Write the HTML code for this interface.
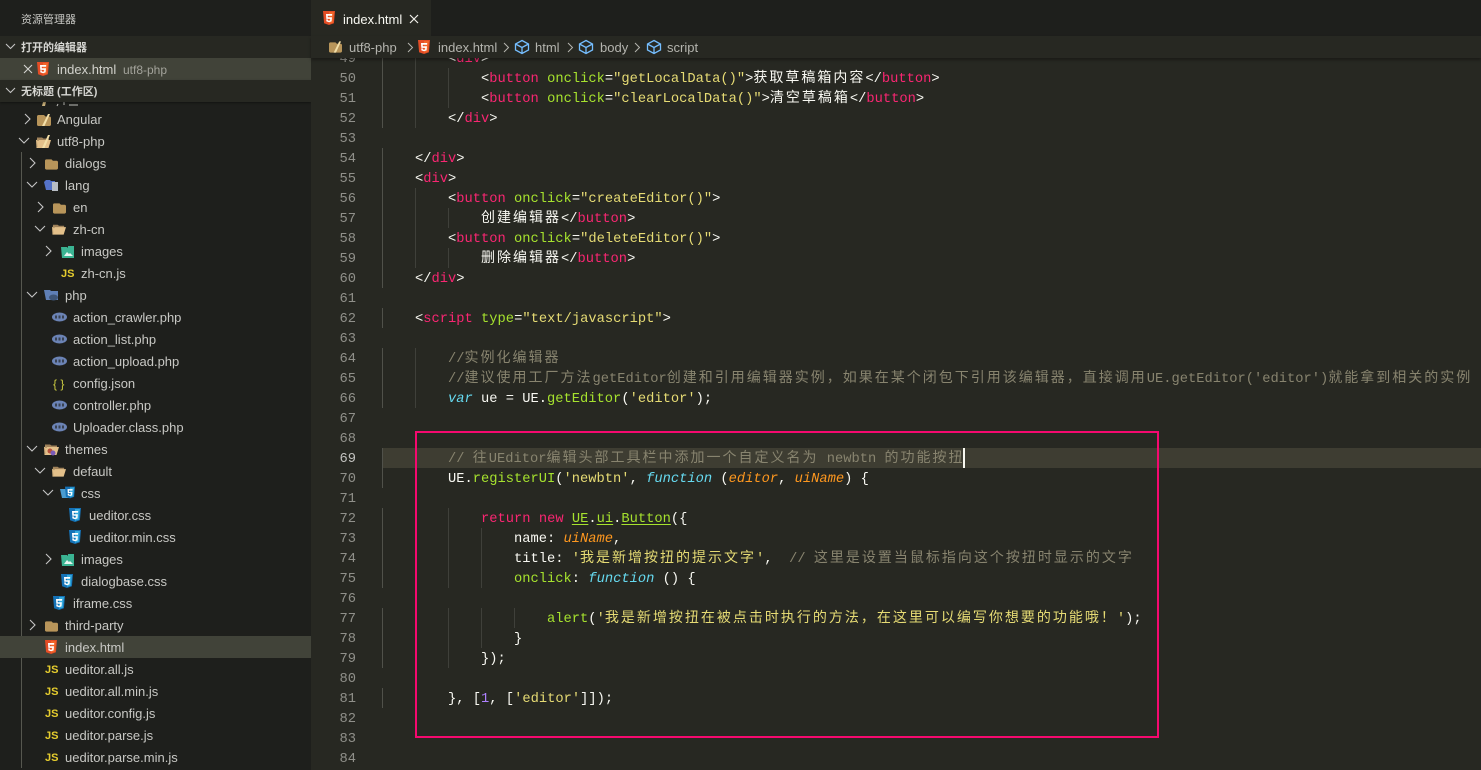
<!DOCTYPE html>
<html lang="zh"><head><meta charset="utf-8"><title>index.html</title>
<style>
*{box-sizing:border-box}
html,body{margin:0;padding:0;width:1481px;height:770px;overflow:hidden;background:#272822}
body{position:relative;font-family:"Liberation Sans","Noto Sans CJK SC",sans-serif}
svg{position:absolute;display:block;overflow:visible}
#side{position:absolute;left:0;top:0;width:311px;height:770px;background:#1e1f1c;overflow:hidden;color:#c8c8c4;font-size:13px}
.sh{position:absolute;left:0;width:311px;height:22px;background:#272822;line-height:24px;font-size:11px;font-weight:bold;color:#d6d6d2}
.sh span{position:absolute;left:21px}
.r{position:absolute;left:0;width:311px;height:22px;line-height:24px;white-space:nowrap}
.r span{position:absolute;top:0}
.sel{background:#414339}
.js{position:absolute;font:bold 11px/24px "Liberation Sans",sans-serif;color:#e6cd2e;top:0}
#tree{position:absolute;left:21px;top:152px;width:1px;height:616px;background:#56574f}
#tabs{position:absolute;left:311px;top:0;width:1170px;height:36px;background:#1e1f1c}
#tab{position:absolute;left:0;top:0;width:120px;height:36px;background:#272822;color:#f8f8f2;font-size:13px;line-height:39px}
#crumb{position:absolute;left:311px;top:36px;width:1170px;height:22px;background:#272822;box-shadow:0 2px 3px rgba(0,0,0,.35);z-index:5;color:#b4b4ae;font-size:13px;line-height:23px}
#crumb span{position:absolute;top:0;white-space:nowrap}
#ed{position:absolute;left:311px;top:58px;width:1170px;height:712px;overflow:hidden;background:#272822}
.l{position:absolute;left:0;width:1170px;height:20px;line-height:20px;white-space:pre;font:13.75px/20px "Liberation Mono",monospace;color:#f8f8f2;font-weight:normal}
.l>u{position:absolute;right:1125px;top:2px;width:40px;text-align:right;color:#90908a;text-decoration:none}
.l>div{position:absolute;top:2px;left:71px;height:20px}
.l::before{content:"";position:absolute;left:71px;top:0;height:20px;width:var(--g,0);background:linear-gradient(#50514a,#50514a) 0 0/1px 100% no-repeat,repeating-linear-gradient(90deg,#3f403a 0 1px,transparent 1px 33px)}
.z{font-family:"Noto Sans CJK SC","WenQuanYi Zen Hei",sans-serif;font-size:14px;line-height:0;letter-spacing:2px;font-style:normal}
.p{color:#f92672}.g{color:#a6e22e}.y{color:#e6db74}.c{color:#88846f}.b{color:#66d9ef;font-style:italic}.o{color:#fd971f;font-style:italic}.v{color:#ae81ff}
.n{text-decoration:underline;text-decoration-color:#a6e22e;text-underline-offset:2px}
#hl{position:absolute;left:71px;top:390px;width:1099px;height:20px;background:#3e3d32}
#cur{position:absolute;left:652px;top:390px;width:2px;height:20px;background:#f8f8f0;z-index:3}
#box{position:absolute;left:415px;top:431px;width:744px;height:307px;border:2px solid #f5096f;z-index:9}
</style></head><body>
<svg width="0" height="0" style="position:absolute"><defs>
<symbol id="h5" viewBox="0 0 12 14"><path d="M0 0h12l-1.1 12.3L6 14 1.1 12.3z" fill="#e44d26"/><path d="M6 1v11.9l3.9-1.3L10.9 1z" fill="#f16529"/><path d="M3 3h6.2l-.1 1.7H4.7l.1 1.6h4.2l-.4 4.1L6 11.2l-2.6-.8-.2-2h1.6l.1 1L6 9.8l1.1-.4.1-1.5H3.3z" fill="#fff"/></symbol>
<symbol id="c3" viewBox="0 0 12 14"><path d="M0 0h12l-1.1 12.3L6 14 1.1 12.3z" fill="#1572b6"/><path d="M6 1v11.9l3.9-1.3L10.9 1z" fill="#33a9dc"/><path d="M3 3h6.2L9 4.700H4.700l.1 1.500H8.900l-.4 4.200L6 11.200l-2.600-.8-.2-2h1.600l.1 1L6 9.800l1.100-.4.1-1.600H3.300z" fill="#fff"/></symbol>
<symbol id="fo" viewBox="0 0 14 12"><path d="M0 2.500C0 1.700.6 1 1.500 1H7l1.500 1.500h4c.8 0 1.500.6 1.500 1.500v6.500c0 .9-.7 1.500-1.500 1.500h-11C.6 12 0 11.400 0 10.500z" fill="#b8955a"/></symbol>
<symbol id="fp" viewBox="0 0 15 12"><path d="M1 1.500h5l1.500 1H13v2H1z" fill="#a0825a"/><path d="M3 4h12l-2.500 8H.5L0 4z" fill="#e3c08a"/><path d="M.8 3.500h2.200V5H1L1.500 11H.7z" fill="#b99c6d"/></symbol>
<symbol id="ph" viewBox="0 0 15 10"><ellipse cx="7.500" cy="5" rx="7.500" ry="4.500" fill="#6b83b5"/><path d="M3 3.500h2v3H3zM6.500 3.500h2v3h-2zM10 3.500h2v3h-2z" fill="#1e1f1c" opacity=".65"/></symbol>
<symbol id="cu" viewBox="0 0 16 16"><path d="M8 1.500 14.500 5v6L8 14.500 1.500 11V5zM1.500 5 8 8.500 14.500 5M8 8.500v6" fill="none" stroke="#75beff" stroke-width="1.300"/></symbol>
</defs></svg>

<div id="side">
<div style="position:absolute;left:21px;top:12px;font-size:11px;line-height:16px;color:#c8c8c4">资源管理器</div>

<svg style="left:40px;top:101px" width="40" height="6" viewBox="0 0 40 6"><path d="M3 1l-1 4h3l1-4z" fill="#c9b07a"/><path d="M18 3l-1 2M24 1v3M29 4h9" stroke="#bdbdb8" stroke-width="1" fill="none"/></svg>
<div id="tree"></div>

<div class="r" style="top:108px"><svg style="left:24px;top:5px" width="8" height="12" viewBox="0 0 8 12"><path d="M1 1l5 5-5 5" fill="none" stroke="#c5c5c5" stroke-width="1.100"/></svg><svg style="left:37px;top:6px" width="14" height="12"><use href="#fo"/></svg><svg style="left:37px;top:6px" width="14" height="12" viewBox="0 0 14 12"><path d="M11 0 5 12h2.500L13 0z" fill="#f3dfa8"/></svg><span style="left:57px">Angular</span></div>
<div class="r" style="top:130px"><svg style="left:18px;top:7px" width="12" height="8" viewBox="0 0 12 8"><path d="M1 1l5 5 5-5" fill="none" stroke="#c5c5c5" stroke-width="1.100"/></svg><svg style="left:36px;top:6px" width="15" height="12"><use href="#fp"/></svg><svg style="left:37px;top:5px" width="14" height="13" viewBox="0 0 14 13"><path d="M11 0 5 13h2.500L13 0z" fill="#f3dfa8"/></svg><span style="left:57px">utf8-php</span></div>
<div class="r" style="top:152px"><svg style="left:29px;top:5px" width="8" height="12" viewBox="0 0 8 12"><path d="M1 1l5 5-5 5" fill="none" stroke="#c5c5c5" stroke-width="1.100"/></svg><svg style="left:45px;top:6px" width="13" height="12"><use href="#fo"/></svg><span style="left:65px">dialogs</span></div>
<div class="r" style="top:174px"><svg style="left:26px;top:7px" width="12" height="8" viewBox="0 0 12 8"><path d="M1 1l5 5 5-5" fill="none" stroke="#c5c5c5" stroke-width="1.100"/></svg><svg style="left:44px;top:5px" width="15" height="12" viewBox="0 0 15 12"><path d="M0 3l2-2h4l1 1h4v9H2z" fill="#5573c9"/><rect x="8" y="3" width="6" height="9" fill="#b9bec6"/></svg><span style="left:65px">lang</span></div>
<div class="r" style="top:196px"><svg style="left:37px;top:5px" width="8" height="12" viewBox="0 0 8 12"><path d="M1 1l5 5-5 5" fill="none" stroke="#c5c5c5" stroke-width="1.100"/></svg><svg style="left:53px;top:6px" width="13" height="12"><use href="#fo"/></svg><span style="left:73px">en</span></div>
<div class="r" style="top:218px"><svg style="left:34px;top:7px" width="12" height="8" viewBox="0 0 12 8"><path d="M1 1l5 5 5-5" fill="none" stroke="#c5c5c5" stroke-width="1.100"/></svg><svg style="left:52px;top:5px" width="14" height="12"><use href="#fp"/></svg><span style="left:73px">zh-cn</span></div>
<div class="r" style="top:240px"><svg style="left:45px;top:5px" width="8" height="12" viewBox="0 0 8 12"><path d="M1 1l5 5-5 5" fill="none" stroke="#c5c5c5" stroke-width="1.100"/></svg><svg style="left:61px;top:5px" width="14" height="13" viewBox="0 0 14 13"><path d="M0 2h6l1 1V1h6v12H1z" fill="#3bb493"/><path d="M3 11l3-4 2 2 1-1 3 3z" fill="#e8f5f1"/></svg><span style="left:81px">images</span></div>
<div class="r" style="top:262px"><span class="js" style="left:61px">JS</span><span style="left:81px">zh-cn.js</span></div>
<div class="r" style="top:284px"><svg style="left:26px;top:7px" width="12" height="8" viewBox="0 0 12 8"><path d="M1 1l5 5 5-5" fill="none" stroke="#c5c5c5" stroke-width="1.100"/></svg><svg style="left:44px;top:4px" width="15" height="13" viewBox="0 0 15 13"><path d="M0 2h6l1 1h7v9H2z" fill="#5f7fb6"/><ellipse cx="9.500" cy="9.500" rx="4.500" ry="3" fill="#3f5576"/></svg><span style="left:65px">php</span></div>
<div class="r" style="top:306px"><svg style="left:52px;top:6px" width="15" height="10"><use href="#ph"/></svg><span style="left:73px">action_crawler.php</span></div>
<div class="r" style="top:328px"><svg style="left:52px;top:6px" width="15" height="10"><use href="#ph"/></svg><span style="left:73px">action_list.php</span></div>
<div class="r" style="top:350px"><svg style="left:52px;top:6px" width="15" height="10"><use href="#ph"/></svg><span style="left:73px">action_upload.php</span></div>
<div class="r" style="top:372px"><span style="left:53px;color:#cbcb41;font-size:12px">{ }</span><span style="left:73px">config.json</span></div>
<div class="r" style="top:394px"><svg style="left:52px;top:6px" width="15" height="10"><use href="#ph"/></svg><span style="left:73px">controller.php</span></div>
<div class="r" style="top:416px"><svg style="left:52px;top:6px" width="15" height="10"><use href="#ph"/></svg><span style="left:73px">Uploader.class.php</span></div>
<div class="r" style="top:438px"><svg style="left:26px;top:7px" width="12" height="8" viewBox="0 0 12 8"><path d="M1 1l5 5 5-5" fill="none" stroke="#c5c5c5" stroke-width="1.100"/></svg><svg style="left:44px;top:5px" width="15" height="12"><use href="#fp"/></svg><svg style="left:47px;top:10px" width="9" height="8" viewBox="0 0 9 8"><circle cx="3" cy="3" r="2.500" fill="#b5513c"/><circle cx="6" cy="5" r="2.500" fill="#7a5ab8"/></svg><span style="left:65px">themes</span></div>
<div class="r" style="top:460px"><svg style="left:34px;top:7px" width="12" height="8" viewBox="0 0 12 8"><path d="M1 1l5 5 5-5" fill="none" stroke="#c5c5c5" stroke-width="1.100"/></svg><svg style="left:52px;top:5px" width="14" height="12"><use href="#fp"/></svg><span style="left:73px">default</span></div>
<div class="r" style="top:482px"><svg style="left:42px;top:7px" width="12" height="8" viewBox="0 0 12 8"><path d="M1 1l5 5 5-5" fill="none" stroke="#c5c5c5" stroke-width="1.100"/></svg><svg style="left:60px;top:5px" width="9" height="11" viewBox="0 0 9 11"><path d="M0 2h5l4 1v8H2z" fill="#4a9bd0"/></svg><svg style="left:65px;top:4px" width="10" height="13"><use href="#c3"/></svg><span style="left:81px">css</span></div>
<div class="r" style="top:504px"><svg style="left:69px;top:4px" width="12" height="14"><use href="#c3"/></svg><span style="left:89px">ueditor.css</span></div>
<div class="r" style="top:526px"><svg style="left:69px;top:4px" width="12" height="14"><use href="#c3"/></svg><span style="left:89px">ueditor.min.css</span></div>
<div class="r" style="top:548px"><svg style="left:45px;top:5px" width="8" height="12" viewBox="0 0 8 12"><path d="M1 1l5 5-5 5" fill="none" stroke="#c5c5c5" stroke-width="1.100"/></svg><svg style="left:61px;top:5px" width="14" height="13" viewBox="0 0 14 13"><path d="M0 2h6l1 1V1h6v12H1z" fill="#3bb493"/><path d="M3 11l3-4 2 2 1-1 3 3z" fill="#e8f5f1"/></svg><span style="left:81px">images</span></div>
<div class="r" style="top:570px"><svg style="left:61px;top:4px" width="12" height="14"><use href="#c3"/></svg><span style="left:81px">dialogbase.css</span></div>
<div class="r" style="top:592px"><svg style="left:53px;top:4px" width="12" height="14"><use href="#c3"/></svg><span style="left:73px">iframe.css</span></div>
<div class="r" style="top:614px"><svg style="left:29px;top:5px" width="8" height="12" viewBox="0 0 8 12"><path d="M1 1l5 5-5 5" fill="none" stroke="#c5c5c5" stroke-width="1.100"/></svg><svg style="left:45px;top:6px" width="13" height="12"><use href="#fo"/></svg><span style="left:65px">third-party</span></div>
<div class="r sel" style="top:636px"><svg style="left:45px;top:4px" width="12" height="14"><use href="#h5"/></svg><span style="left:65px">index.html</span></div>
<div class="r" style="top:658px"><span class="js" style="left:45px">JS</span><span style="left:65px">ueditor.all.js</span></div>
<div class="r" style="top:680px"><span class="js" style="left:45px">JS</span><span style="left:65px">ueditor.all.min.js</span></div>
<div class="r" style="top:702px"><span class="js" style="left:45px">JS</span><span style="left:65px">ueditor.config.js</span></div>
<div class="r" style="top:724px"><span class="js" style="left:45px">JS</span><span style="left:65px">ueditor.parse.js</span></div>
<div class="r" style="top:746px"><span class="js" style="left:45px">JS</span><span style="left:65px">ueditor.parse.min.js</span></div>

<div class="sh" style="top:36px"><svg style="left:5px;top:7px" width="11" height="8" viewBox="0 0 11 8"><path d="M1 1l4.500 4.500L10 1" fill="none" stroke="#c5c5c5" stroke-width="1.100"/></svg><span>打开的编辑器</span></div>
<div class="r sel" style="top:58px"><svg style="left:23px;top:6px" width="10" height="10" viewBox="0 0 10 10"><path d="M1 1l8 8M9 1l-8 8" stroke="#d4d4d0" stroke-width="1.100"/></svg><svg style="left:37px;top:4px" width="12" height="14"><use href="#h5"/></svg><span style="left:57px;color:#d2d2cc">index.html</span><span style="left:123px;font-size:12px;color:#a3a39b">utf8-php</span></div>
<div class="sh" style="top:80px;box-shadow:0 1px 2px rgba(0,0,0,.4)"><svg style="left:5px;top:7px" width="11" height="8" viewBox="0 0 11 8"><path d="M1 1l4.500 4.500L10 1" fill="none" stroke="#c5c5c5" stroke-width="1.100"/></svg><span>无标题 (工作区)</span></div>
</div>

<div id="tabs"><div id="tab"><svg style="left:12px;top:11px" width="12" height="14"><use href="#h5"/></svg><span style="position:absolute;left:32px;top:0">index.html</span><svg style="left:98px;top:14px" width="10" height="10" viewBox="0 0 10 10"><path d="M1 1l8 8M9 1l-8 8" stroke="#f0f0ea" stroke-width="1.200"/></svg></div></div>

<div id="crumb">
<svg style="left:18px;top:5px" width="13" height="12"><use href="#fo"/></svg><svg style="left:18px;top:5px" width="13" height="12" viewBox="0 0 14 12"><path d="M11 0 5 12h2.500L13 0z" fill="#f3dfa8"/></svg>
<span style="left:38px">utf8-php</span>
<svg style="left:96px;top:6px" width="7" height="11" viewBox="0 0 7 11"><path d="M1 1l4.500 4.500L1 10" fill="none" stroke="#b4b4ae" stroke-width="1"/></svg>
<svg style="left:107px;top:4px" width="12" height="14"><use href="#h5"/></svg>
<span style="left:127px">index.html</span>
<svg style="left:192px;top:6px" width="7" height="11" viewBox="0 0 7 11"><path d="M1 1l4.500 4.500L1 10" fill="none" stroke="#b4b4ae" stroke-width="1"/></svg>
<svg style="left:203px;top:3px" width="16" height="16"><use href="#cu"/></svg>
<span style="left:224px">html</span>
<svg style="left:256px;top:6px" width="7" height="11" viewBox="0 0 7 11"><path d="M1 1l4.500 4.500L1 10" fill="none" stroke="#b4b4ae" stroke-width="1"/></svg>
<svg style="left:267px;top:3px" width="16" height="16"><use href="#cu"/></svg>
<span style="left:289px">body</span>
<svg style="left:323px;top:6px" width="7" height="11" viewBox="0 0 7 11"><path d="M1 1l4.500 4.500L1 10" fill="none" stroke="#b4b4ae" stroke-width="1"/></svg>
<svg style="left:335px;top:3px" width="16" height="16"><use href="#cu"/></svg>
<span style="left:356px">script</span>
</div>

<div id="ed">
<div id="hl"></div><div id="cur"></div>
<div class="l" style="top:-10px;--g:34px"><u>49</u><div>        &lt;<span class="p">div</span>&gt;</div></div>
<div class="l" style="top:10px;--g:67px"><u>50</u><div>            &lt;<span class="p">button</span> <span class="g">onclick</span>=<span class="y">"getLocalData()"</span>&gt;<span class="z">获取草稿箱内容</span>&lt;/<span class="p">button</span>&gt;</div></div>
<div class="l" style="top:30px;--g:67px"><u>51</u><div>            &lt;<span class="p">button</span> <span class="g">onclick</span>=<span class="y">"clearLocalData()"</span>&gt;<span class="z">清空草稿箱</span>&lt;/<span class="p">button</span>&gt;</div></div>
<div class="l" style="top:50px;--g:34px"><u>52</u><div>        &lt;/<span class="p">div</span>&gt;</div></div>
<div class="l" style="top:70px"><u>53</u></div>
<div class="l" style="top:90px;--g:1px"><u>54</u><div>    &lt;/<span class="p">div</span>&gt;</div></div>
<div class="l" style="top:110px;--g:1px"><u>55</u><div>    &lt;<span class="p">div</span>&gt;</div></div>
<div class="l" style="top:130px;--g:34px"><u>56</u><div>        &lt;<span class="p">button</span> <span class="g">onclick</span>=<span class="y">"createEditor()"</span>&gt;</div></div>
<div class="l" style="top:150px;--g:67px"><u>57</u><div>            <span class="z">创建编辑器</span>&lt;/<span class="p">button</span>&gt;</div></div>
<div class="l" style="top:170px;--g:34px"><u>58</u><div>        &lt;<span class="p">button</span> <span class="g">onclick</span>=<span class="y">"deleteEditor()"</span>&gt;</div></div>
<div class="l" style="top:190px;--g:67px"><u>59</u><div>            <span class="z">删除编辑器</span>&lt;/<span class="p">button</span>&gt;</div></div>
<div class="l" style="top:210px;--g:1px"><u>60</u><div>    &lt;/<span class="p">div</span>&gt;</div></div>
<div class="l" style="top:230px"><u>61</u></div>
<div class="l" style="top:250px;--g:1px"><u>62</u><div>    &lt;<span class="p">script</span> <span class="g">type</span>=<span class="y">"text/javascript"</span>&gt;</div></div>
<div class="l" style="top:270px"><u>63</u></div>
<div class="l" style="top:290px;--g:34px"><u>64</u><div class="c">        //<span class="z">实例化编辑器</span></div></div>
<div class="l" style="top:310px;--g:34px"><u>65</u><div class="c">        //<span class="z">建议使用工厂方法</span>getEditor<span class="z">创建和引用编辑器实例，如果在某个闭包下引用该编辑器，直接调用</span>UE.getEditor('editor')<span class="z">就能拿到相关的实例</span></div></div>
<div class="l" style="top:330px;--g:34px"><u>66</u><div>        <span class="b">var</span> ue = UE.<span class="g">getEditor</span>(<span class="y">'editor'</span>);</div></div>
<div class="l" style="top:350px"><u>67</u></div>
<div class="l" style="top:370px"><u>68</u></div>
<div class="l" style="top:390px;--g:34px"><u style="color:#c2c2bf">69</u><div class="c">        // <span class="z">往</span>UEditor<span class="z">编辑头部工具栏中添加一个自定义名为</span> newbtn <span class="z">的功能按扭</span></div></div>
<div class="l" style="top:410px;--g:34px"><u>70</u><div>        UE.<span class="g">registerUI</span>(<span class="y">'newbtn'</span>, <span class="b">function</span> (<span class="o">editor</span>, <span class="o">uiName</span>) {</div></div>
<div class="l" style="top:430px"><u>71</u></div>
<div class="l" style="top:450px;--g:67px"><u>72</u><div>            <span class="p">return</span> <span class="p">new</span> <span class="g n">UE</span>.<span class="g n">ui</span>.<span class="g n">Button</span>({</div></div>
<div class="l" style="top:470px;--g:100px"><u>73</u><div>                name: <span class="o">uiName</span>,</div></div>
<div class="l" style="top:490px;--g:100px"><u>74</u><div>                title: <span class="y">'<span class="z">我是新增按扭的提示文字</span>'</span>,  <span class="c">// <span class="z">这里是设置当鼠标指向这个按扭时显示的文字</span></span></div></div>
<div class="l" style="top:510px;--g:100px"><u>75</u><div>                <span class="g">onclick</span>: <span class="b">function</span> () {</div></div>
<div class="l" style="top:530px"><u>76</u></div>
<div class="l" style="top:550px;--g:133px"><u>77</u><div>                    <span class="g">alert</span>(<span class="y">'<span class="z">我是新增按扭在被点击时执行的方法，在这里可以编写你想要的功能哦！</span>'</span>);</div></div>
<div class="l" style="top:570px;--g:100px"><u>78</u><div>                }</div></div>
<div class="l" style="top:590px;--g:67px"><u>79</u><div>            });</div></div>
<div class="l" style="top:610px"><u>80</u></div>
<div class="l" style="top:630px;--g:34px"><u>81</u><div>        }, [<span class="v">1</span>, [<span class="y">'editor'</span>]]);</div></div>
<div class="l" style="top:650px"><u>82</u></div>
<div class="l" style="top:670px"><u>83</u></div>
<div class="l" style="top:690px"><u>84</u></div>
</div>
<div id="box"></div>
</body></html>
